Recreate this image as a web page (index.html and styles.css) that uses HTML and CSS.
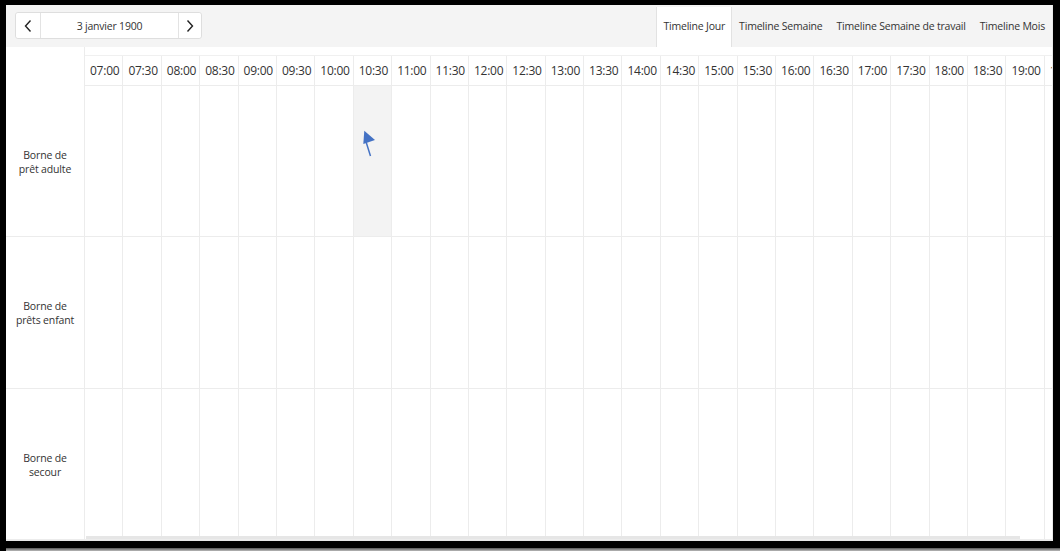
FILE: index.html
```html
<!DOCTYPE html>
<html lang="fr">
<head>
    <meta charset="UTF-8">
    <title>Timeline Jour</title>
    <link rel="stylesheet" href="styles.css">
</head>
<body>

    <div class="frame">
        <div class="scheduler">

            <div class="toolbar">
                <div class="date-nav">
                    <button class="nav-btn prev" type="button">
                        <svg width="10" height="14" viewBox="0 0 10 14"><path d="M7.5 1.5 L2.5 7 L7.5 12.5" fill="none" stroke="#222" stroke-width="1.4"/></svg>
                    </button>
                    <span class="date-label">3 janvier 1900</span>
                    <button class="nav-btn next" type="button">
                        <svg width="10" height="14" viewBox="0 0 10 14"><path d="M2.5 1.5 L7.5 7 L2.5 12.5" fill="none" stroke="#222" stroke-width="1.4"/></svg>
                    </button>
                </div>

                <div class="views">
                    <span class="view active">Timeline Jour</span>
                    <span class="view">Timeline Semaine</span>
                    <span class="view">Timeline Semaine de travail</span>
                    <span class="view">Timeline Mois</span>
                </div>
            </div>

            <div class="header">
                <div class="corner"></div>
                <div class="times" id="times"></div>
            </div>

            <div class="body">
                <div class="resources">
                    <div class="resource">Borne de<br>prêt adulte</div>
                    <div class="resource">Borne de<br>prêts enfant</div>
                    <div class="resource">Borne de<br>secour</div>
                </div>
                <div class="grid" id="grid"></div>

                <!-- annotation arrow -->
                <svg class="pointer" width="20" height="32" viewBox="0 0 20 32">
                    <path d="M11.5 28 L6.8 13" stroke="#4472c4" stroke-width="1.5" fill="none"/>
                    <polygon points="5.3,2.7 4.3,16 16,12" fill="#4472c4"/>
                </svg>

                <div class="scrollbar"></div>
            </div>

        </div>
    </div>

    <script>
        var times = document.getElementById("times");
        var grid = document.getElementById("grid");
        var labels = [];
        for (var h = 7; h <= 19; h++) {
            var hh = (h < 10 ? "0" : "") + h;
            labels.push(hh + ":00", hh + ":30");
        }

        labels.forEach(function (t) {
            var cell = document.createElement("div");
            cell.className = "time";
            cell.textContent = t;
            times.appendChild(cell);
        });

        for (var r = 0; r < 3; r++) {
            var row = document.createElement("div");
            row.className = "row";
            labels.forEach(function (t) {
                var slot = document.createElement("div");
                slot.className = "slot";
                if (r === 0 && t === "10:30") {
                    slot.className += " selected";
                }
                row.appendChild(slot);
            });
            grid.appendChild(row);
        }
    </script>
</body>
</html>
```

FILE: styles.css
```css
html, body {
    margin: 0;
    padding: 0;
}

body {
    background-color: #000;
    width: 1060px;
    height: 551px;
    overflow: hidden;
    font-family: 'Open Sans', 'Noto Sans', sans-serif;
    color: #333;
    position: relative;
}

/* soft shadow under the captured window */
body::after {
    content: "";
    position: absolute;
    left: 6px;
    right: 0;
    bottom: 0;
    height: 3px;
    background: linear-gradient(#555, #bbb);
}

.frame {
    margin: 5px 0 0 6px;
    width: 1047px;
    height: 536px;
    background-color: #e9e9e9;
}

.scheduler {
    width: 1046px;
    height: 535px;
    background-color: #fff;
    overflow: hidden;
    display: flex;
    flex-direction: column;
}

/* toolbar */
.toolbar {
    height: 42px;
    flex: none;
    background-color: #f4f4f4;
    display: flex;
    justify-content: space-between;
}

.date-nav {
    margin: 7px 0 0 9px;
    height: 27px;
    display: flex;
    border: 1px solid #dedede;
    border-radius: 3px;
    background-color: #fff;
    box-sizing: border-box;
}

.nav-btn {
    padding: 0;
    border: none;
    background: #fff;
    display: flex;
    align-items: center;
    justify-content: center;
    border-radius: 3px;
}

.nav-btn.prev {
    width: 24px;
}

.nav-btn.next {
    width: 22px;
}

.date-label {
    width: 137px;
    border-left: 1px solid #e3e3e3;
    border-right: 1px solid #e3e3e3;
    font-size: 10.5px;
    letter-spacing: -0.2px;
    color: #333;
    display: flex;
    align-items: center;
    justify-content: center;
}

.views {
    display: flex;
    align-items: stretch;
    padding-top: 2px;
}

.view {
    padding: 0 7px 2px;
    font-size: 10.5px;
    letter-spacing: -0.2px;
    color: #333;
    display: flex;
    align-items: center;
    white-space: nowrap;
}

.view.active {
    background-color: #fff;
    border-left: 1px solid #e2e2e2;
    border-right: 1px solid #e2e2e2;
    padding: 0 6px 2px;
}

/* time header */
.header {
    height: 39px;
    flex: none;
    display: flex;
}

.corner {
    width: 78px;
    flex: none;
    border-right: 1px solid #ececec;
}

.times {
    display: flex;
    margin-top: 8px;
    border-top: 1px solid #f0f0f0;
    border-bottom: 1px solid #ececec;
}

.time {
    width: 38.4px;
    flex: none;
    box-sizing: border-box;
    border-right: 1px solid #ececec;
    padding-left: 5px;
    font-size: 12px;
    letter-spacing: -0.25px;
    line-height: 30px;
    color: #333;
    white-space: nowrap;
    overflow: hidden;
}

/* resource rows */
.body {
    flex: 1;
    display: flex;
    position: relative;
}

.resources {
    width: 78px;
    flex: none;
    display: flex;
    flex-direction: column;
    border-right: 1px solid #ececec;
}

.resource {
    flex: 1;
    display: flex;
    align-items: center;
    justify-content: center;
    text-align: center;
    font-size: 10.5px;
    letter-spacing: -0.15px;
    line-height: 14px;
    color: #333;
    border-bottom: 1px solid #ececec;
    padding-top: 2px;
}

.grid {
    display: flex;
    flex-direction: column;
    flex: none;
}

.row {
    flex: 1;
    display: flex;
    border-bottom: 1px solid #ececec;
}

.slot {
    width: 38.4px;
    flex: none;
    box-sizing: border-box;
    border-right: 1px solid #ececec;
}

.slot.selected {
    background-color: #f3f3f3;
}

.pointer {
    position: absolute;
    left: 353px;
    top: 42px;
}

.scrollbar {
    position: absolute;
    left: 80px;
    bottom: 1px;
    width: 934px;
    height: 3px;
    background-color: #e6e6e6;
}
```
